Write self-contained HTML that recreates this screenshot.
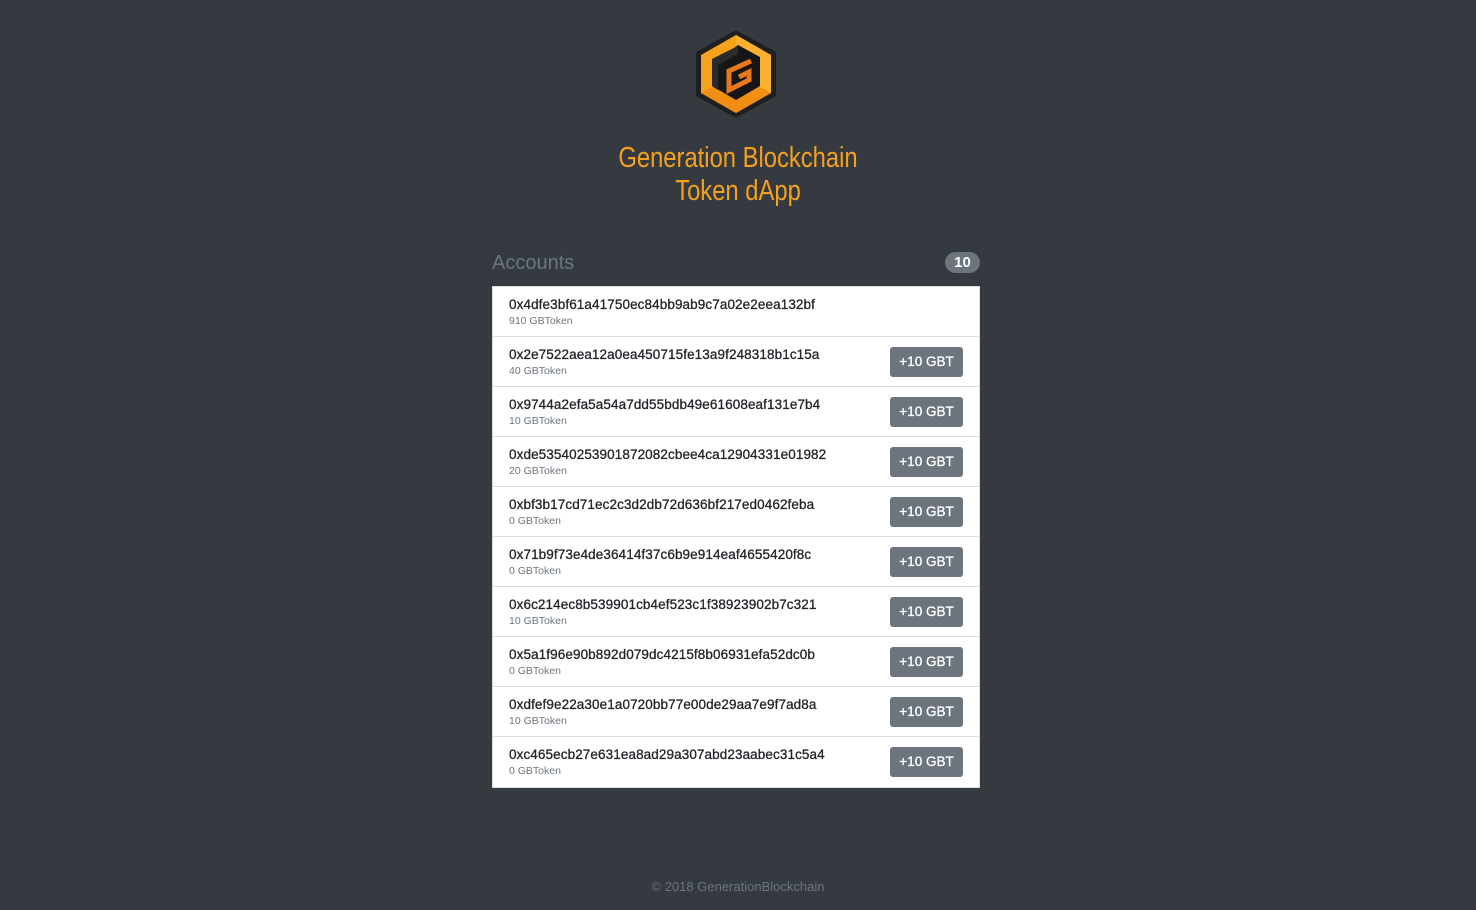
<!DOCTYPE html>
<html><head><meta charset="utf-8"><style>
html,body{margin:0;padding:0;}
body{width:1476px;height:910px;background:#343a40;font-family:"Liberation Sans",sans-serif;position:relative;overflow:hidden;}
.logo{position:absolute;left:694px;top:28px;}
h1{position:absolute;top:142px;left:0;width:1476px;text-align:center;margin:0;color:#f5a11f;font-family:"Liberation Sans Narrow","Liberation Sans",sans-serif;font-weight:normal;font-size:29px;line-height:33px;transform:scaleX(0.82);}
.acc{position:absolute;left:492px;top:252px;font-size:20px;color:#6c757d;}
.badge{position:absolute;left:945px;top:252px;width:35px;height:21px;border-radius:11px;background:#6c757d;color:#fff;font-weight:bold;font-size:15px;text-align:center;line-height:21px;}
.list{position:absolute;left:492px;top:286px;width:488px;background:#fff;border:1px solid #ddd;box-sizing:border-box;}
.row{height:50px;border-bottom:1px solid #dcdcdc;box-sizing:border-box;position:relative;}
.row:last-child{border-bottom:none;}
.a{position:absolute;left:16px;top:10px;font-size:13.5px;color:#212529;letter-spacing:0.1px;-webkit-text-stroke:0.3px #212529;}
.b{position:absolute;left:16px;top:28px;font-size:10.5px;color:#6c757d;}
.btn{position:absolute;left:397px;top:10px;width:73px;height:30px;background:#6c757d;border-radius:3px;color:#fff;font-size:13.5px;text-align:center;line-height:30px;-webkit-text-stroke:0.3px #fff;}
.foot{position:absolute;top:879px;width:1476px;text-align:center;color:#6c757d;font-size:13px;}
</style></head><body>
<svg class="logo" width="84" height="92" viewBox="0 0 84 92">
<polygon points="42,2 82,24 82,68 42,90 2,68 2,24" fill="#1f1f1f"/>
<polygon points="42,7 77,27 77,65 42,85 7,65 7,27" fill="#f7a21b"/>
<polygon points="42,7 77,27 77,65 42,46" fill="#fbb233"/>
<polygon points="42,46 77,65 42,85 7,65" fill="#f08f14"/>
<polygon points="44,17 66,29 66,58 42,72 18,58 18,31 40,20" fill="#161616"/>
<polygon points="18,31 40,20 44,17 44,26 24,37 24,62 18,58" fill="#2b2b2b"/>
<polyline points="57,33 35,43 35,62 55,52 55,44 45,49" fill="none" stroke="#e8781a" stroke-width="5" stroke-linejoin="miter"/>
</svg>
<h1>Generation Blockchain<br>Token dApp</h1>
<div class="acc">Accounts</div>
<div class="badge">10</div>
<div class="list">
<div class="row"><div class="a">0x4dfe3bf61a41750ec84bb9ab9c7a02e2eea132bf</div><div class="b">910 GBToken</div></div>
<div class="row"><div class="a">0x2e7522aea12a0ea450715fe13a9f248318b1c15a</div><div class="b">40 GBToken</div><div class="btn">+10 GBT</div></div>
<div class="row"><div class="a">0x9744a2efa5a54a7dd55bdb49e61608eaf131e7b4</div><div class="b">10 GBToken</div><div class="btn">+10 GBT</div></div>
<div class="row"><div class="a">0xde53540253901872082cbee4ca12904331e01982</div><div class="b">20 GBToken</div><div class="btn">+10 GBT</div></div>
<div class="row"><div class="a">0xbf3b17cd71ec2c3d2db72d636bf217ed0462feba</div><div class="b">0 GBToken</div><div class="btn">+10 GBT</div></div>
<div class="row"><div class="a">0x71b9f73e4de36414f37c6b9e914eaf4655420f8c</div><div class="b">0 GBToken</div><div class="btn">+10 GBT</div></div>
<div class="row"><div class="a">0x6c214ec8b539901cb4ef523c1f38923902b7c321</div><div class="b">10 GBToken</div><div class="btn">+10 GBT</div></div>
<div class="row"><div class="a">0x5a1f96e90b892d079dc4215f8b06931efa52dc0b</div><div class="b">0 GBToken</div><div class="btn">+10 GBT</div></div>
<div class="row"><div class="a">0xdfef9e22a30e1a0720bb77e00de29aa7e9f7ad8a</div><div class="b">10 GBToken</div><div class="btn">+10 GBT</div></div>
<div class="row"><div class="a">0xc465ecb27e631ea8ad29a307abd23aabec31c5a4</div><div class="b">0 GBToken</div><div class="btn">+10 GBT</div></div>
</div>
<div class="foot">© 2018 GenerationBlockchain</div>
</body></html>
